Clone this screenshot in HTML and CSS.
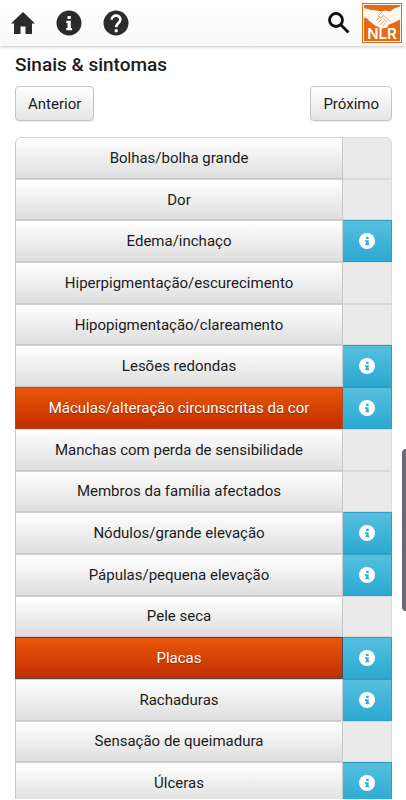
FILE: index.html
```html
<!DOCTYPE html>
<html lang="pt">
<head>
<meta charset="utf-8">
<meta name="viewport" content="width=device-width, initial-scale=1">
<title>Sinais &amp; sintomas</title>
<link rel="stylesheet" href="styles.css">
</head>
<body>
<svg class="defs" aria-hidden="true">
  <symbol id="info" viewBox="0 0 24 24">
    <circle cx="12" cy="12" r="12" fill="currentColor"/>
    <path class="cut" d="M10.500 5.500h4V9h-4zM9 11h5.500v5h1v2.500H9.500V16h1v-2.500H9z"/>
  </symbol>
</svg>
<header class="topbar">
  <nav class="topnav">
    <a href="#home" aria-label="Início"><svg class="home" viewBox="0 0 24 22"><path d="M12 0L0 11.500h3V22h6.500v-7.500h5V22H21V11.500h3z"/></svg></a>
    <a href="#info" aria-label="Informações"><svg class="round" viewBox="0 0 26 26"><circle cx="13" cy="13" r="12.500"/><path class="cut" d="M11.500 6h3.300v3h-3.300zM10.300 10.800h4.500v7.200h1.300v2.200h-5.900V18h1.300v-5h-1.200z"/></svg></a>
    <a href="#help" aria-label="Ajuda"><svg class="round" viewBox="0 0 26 26"><circle cx="13" cy="13" r="12.500"/><path class="line" d="M8.700 9.800c0-5.600 8.700-5.400 8.700-.3 0 3.400-4.200 3.600-4.200 7.700"/><circle class="cut" cx="13.200" cy="20.700" r="1.700"/></svg></a>
  </nav>
  <nav class="tools">
    <a href="#search" aria-label="Pesquisar"><svg class="search" viewBox="0 0 22 22"><circle cx="8" cy="8" r="6.500"/><path d="M12.800 12.800L20.500 20.500"/></svg></a>
    <a href="#nlr" class="brand"><svg class="logo" viewBox="0 0 40 40" role="img" aria-label="NLR">
      <rect width="40" height="40" fill="#dc701f"/>
      <rect x="1.500" y="1.500" width="37" height="37" fill="#e06c1a" stroke="#fff3e4"/>
      <path class="hand" d="M2 5l7 2 6 .5 4 1 4-1 5 1 4-3 6-2v13l-6 3-5 2-2 3-5 1-3-1-4-2-5-4-3-3-3-1z"/>
      <path class="crease" d="M20 9l-4 4 3 1.500 3-2 6 6M14.500 17.500l3.500-3M15.500 20l4.500-4M17.500 22l4.500-4M20.500 23l3-3M21 15l4 4"/>
      <text x="20" y="36" text-anchor="middle">NLR</text>
    </svg></a>
  </nav>
</header>
<main>
  <h1>Sinais &amp; sintomas</h1>
  <div class="pager"><button type="button">Anterior</button><button type="button">Próximo</button></div>
  <ul class="list">
    <li><button type="button" class="item">Bolhas/bolha grande</button><span class="side"></span></li>
    <li><button type="button" class="item">Dor</button><span class="side"></span></li>
    <li><button type="button" class="item">Edema/inchaço</button><button type="button" class="side more" aria-label="Informações"><svg><use href="#info"/></svg></button></li>
    <li><button type="button" class="item">Hiperpigmentação/escurecimento</button><span class="side"></span></li>
    <li><button type="button" class="item">Hipopigmentação/clareamento</button><span class="side"></span></li>
    <li><button type="button" class="item">Lesões redondas</button><button type="button" class="side more" aria-label="Informações"><svg><use href="#info"/></svg></button></li>
    <li><button type="button" class="item on" aria-pressed="true">Máculas/alteração circunscritas da cor</button><button type="button" class="side more" aria-label="Informações"><svg><use href="#info"/></svg></button></li>
    <li><button type="button" class="item">Manchas com perda de sensibilidade</button><span class="side"></span></li>
    <li><button type="button" class="item">Membros da família afectados</button><span class="side"></span></li>
    <li><button type="button" class="item">Nódulos/grande elevação</button><button type="button" class="side more" aria-label="Informações"><svg><use href="#info"/></svg></button></li>
    <li><button type="button" class="item">Pápulas/pequena elevação</button><button type="button" class="side more" aria-label="Informações"><svg><use href="#info"/></svg></button></li>
    <li><button type="button" class="item">Pele seca</button><span class="side"></span></li>
    <li><button type="button" class="item on current" aria-pressed="true">Placas</button><button type="button" class="side more" aria-label="Informações"><svg><use href="#info"/></svg></button></li>
    <li><button type="button" class="item">Rachaduras</button><button type="button" class="side more" aria-label="Informações"><svg><use href="#info"/></svg></button></li>
    <li><button type="button" class="item">Sensação de queimadura</button><span class="side"></span></li>
    <li><button type="button" class="item">Úlceras</button><button type="button" class="side more" aria-label="Informações"><svg><use href="#info"/></svg></button></li>
  </ul>
</main>
<div class="thumb" aria-hidden="true"></div>
</body>
</html>
```
FILE: styles.css
```css
* { box-sizing: border-box; }
body {
  margin: 0;
  height: 100vh;
  padding-bottom: 1px;
  display: flex;
  flex-direction: column;
  overflow: hidden;
  background: #fff;
  color: #1c1c1c;
  font-family: Roboto, "Liberation Sans", sans-serif;
}
button { font: inherit; color: inherit; margin: 0; cursor: pointer; }
.defs { position: absolute; width: 0; height: 0; }
.topbar {
  flex: none;
  height: 46px;
  padding: 0 4px 0 11px;
  display: flex;
  justify-content: space-between;
  align-items: center;
  background: linear-gradient(#fff, #f8f8f8);
  box-shadow: 0 1px 3px rgba(0, 0, 0, .22);
}
.topnav, .tools { display: flex; align-items: center; }
.topnav { gap: 21px; }
.tools { gap: 12px; }
.topbar a { display: flex; color: #2b2b2b; }
.topbar svg { display: block; fill: currentColor; }
.home { width: 24px; height: 22px; }
.round { width: 26px; height: 26px; }
.cut { fill: #3bafd5; }
.topbar .cut { fill: #fff; }
.round .line { fill: none; stroke: #fff; stroke-width: 2.6; }
.topbar .search { width: 22px; height: 22px; fill: none; stroke: #111; stroke-width: 2.8; }
.logo { width: 40px; height: 40px; }
.logo .hand { fill: #fff9f0; }
.logo .crease { fill: none; stroke: #df8a4c; stroke-width: .8; }
.logo text { font: 600 15px Inter, sans-serif; fill: #fffaf2; }
main {
  flex: 1;
  min-height: 0;
  overflow-y: auto;
  scrollbar-width: none;
  padding: 7px 14px 0 15px;
}
h1 { margin: 0; font-size: 19px; line-height: 24px; font-weight: 500; color: #1c1c1c; }
.pager { display: flex; justify-content: space-between; margin: 9px 0 16px; }
.pager button {
  height: 35px;
  padding: 0 12px;
  border: 1px solid #c6c6c6;
  border-radius: 4px;
  background: linear-gradient(#fff, #e4e4e4);
  box-shadow: 0 1px 1px rgba(0, 0, 0, .08);
  font-size: 15px;
}
.list {
  list-style: none;
  margin: 0;
  padding: 0;
  min-height: 667px;
  display: grid;
  grid-auto-rows: 1fr;
  border-radius: 6px;
  overflow: hidden;
}
.list li { display: grid; grid-template-columns: 1fr 49px; }
.item {
  padding: 0 8px;
  border: 1px solid #c9c9c9;
  border-top-color: #d2d2d2;
  background: linear-gradient(#fff, #dedede);
  font-size: 15px;
}
.item.on {
  color: #fff;
  border-color: #b34a20;
  background: linear-gradient(#e9570c, #c12e00);
  text-shadow: 0 1px 1px rgba(0, 0, 0, .35);
}
.item.current { border-color: #4b4b50; }
.side { border: 1px solid #dadada; border-left: 0; background: #eaeaea; }
.more {
  display: grid;
  place-items: center;
  padding: 0;
  border: 1px solid #329dc2;
  border-left-width: 0;
  color: #fff;
  background: linear-gradient(#56bfe0, #2ba9d2);
}
.more svg { width: 16px; height: 16px; }
.list li:first-child .item { border-top-left-radius: 6px; }
.list li:first-child .side { border-top-right-radius: 6px; }
.thumb {
  position: absolute;
  right: 0;
  top: 449px;
  width: 4px;
  height: 162px;
  border-radius: 4px 0 0 4px;
  background: #6b6973;
}
```
